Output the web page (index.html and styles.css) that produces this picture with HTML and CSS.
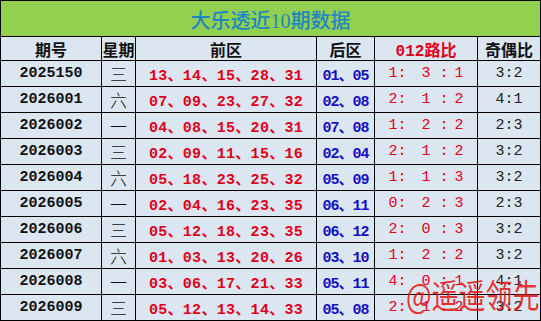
FILE: index.html
```html
<!DOCTYPE html>
<html lang="zh">
<head>
<meta charset="utf-8">
<title>大乐透近10期数据</title>
<link rel="stylesheet" href="styles.css">
</head>
<body>
<div class="sheet">
  <div class="title">大乐透近10期数据</div>
  <div class="hd">期号</div><div class="hd">星期</div><div class="hd">前区</div><div class="hd">后区</div><div class="hd red">012路比</div><div class="hd">奇偶比</div>

  <div class="c id">2025150</div><div class="c wk">三</div><div class="c fr">13、14、15、28、31</div><div class="c bk">01、05</div><div class="c ra">1<i>:</i> 3 <i>:</i>1</div><div class="c oe">3:2</div>
  <div class="c id">2026001</div><div class="c wk">六</div><div class="c fr">07、09、23、27、32</div><div class="c bk">02、08</div><div class="c ra">2<i>:</i> 1 <i>:</i>2</div><div class="c oe">4:1</div>
  <div class="c id">2026002</div><div class="c wk">一</div><div class="c fr">04、08、15、20、31</div><div class="c bk">07、08</div><div class="c ra">1<i>:</i> 2 <i>:</i>2</div><div class="c oe">2:3</div>
  <div class="c id">2026003</div><div class="c wk">三</div><div class="c fr">02、09、11、15、16</div><div class="c bk">02、04</div><div class="c ra">2<i>:</i> 1 <i>:</i>2</div><div class="c oe">3:2</div>
  <div class="c id">2026004</div><div class="c wk">六</div><div class="c fr">05、18、23、25、32</div><div class="c bk">05、09</div><div class="c ra">1<i>:</i> 1 <i>:</i>3</div><div class="c oe">3:2</div>
  <div class="c id">2026005</div><div class="c wk">一</div><div class="c fr">02、04、16、23、35</div><div class="c bk">06、11</div><div class="c ra">0<i>:</i> 2 <i>:</i>3</div><div class="c oe">2:3</div>
  <div class="c id">2026006</div><div class="c wk">三</div><div class="c fr">05、12、18、23、35</div><div class="c bk">06、12</div><div class="c ra">2<i>:</i> 0 <i>:</i>3</div><div class="c oe">3:2</div>
  <div class="c id">2026007</div><div class="c wk">六</div><div class="c fr">01、03、13、20、26</div><div class="c bk">03、10</div><div class="c ra">1<i>:</i> 2 <i>:</i>2</div><div class="c oe">3:2</div>
  <div class="c id">2026008</div><div class="c wk">一</div><div class="c fr">03、06、17、21、33</div><div class="c bk">05、11</div><div class="c ra">4<i>:</i> 0 <i>:</i>1</div><div class="c oe">4:1</div>
  <div class="c id">2026009</div><div class="c wk">三</div><div class="c fr">05、12、13、14、33</div><div class="c bk">05、08</div><div class="c ra">2<i>:</i> 1 <i>:</i>2</div><div class="c oe">3:2</div>
</div>
<div class="mark">@遥遥领先</div>
</body>
</html>
```
FILE: styles.css
```css
html, body {
  margin: 0;
  padding: 0;
  background: #ffffff;
}
body {
  position: relative;
  width: 541px;
  height: 321px;
  overflow: hidden;
}
.sheet {
  display: grid;
  grid-template-columns: 100px 33px 180px 57px 102px 62px;
  grid-template-rows: 35px 23px repeat(10, 25px);
  gap: 1px;
  padding: 1px;
  background: #000;
  width: 541px;
  box-sizing: border-box;
}
.title {
  grid-column: 1 / -1;
  background: #92d050;
  color: #1f86c2;
  font-family: "Liberation Serif", "Noto Sans CJK SC", sans-serif;
  font-size: 20px;
  font-weight: 500;
  display: flex;
  align-items: center;
  justify-content: center;
  padding-top: 1px;
}
.hd, .c {
  background: #dce6f1;
  display: flex;
  align-items: center;
  justify-content: center;
  white-space: pre;
}
.hd {
  font-family: "Liberation Mono", "Noto Sans CJK SC", monospace;
  font-size: 16px;
  font-weight: 700;
  color: #111;
}
.hd.red {
  color: #e0001b;
}
.c {
  font-family: "Liberation Mono", "Noto Sans CJK SC", monospace;
  font-size: 15px;
}
.id {
  font-weight: 700;
  color: #111;
}
.wk {
  font-family: "Noto Sans CJK SC", sans-serif;
  font-size: 17px;
  font-weight: 300;
  color: #111;
}
.fr {
  font-weight: 700;
  color: #e0001b;
  letter-spacing: 0.3px;
}
.bk {
  font-weight: 700;
  color: #1010c4;
  letter-spacing: -1px;
}
.ra {
  color: #e0001b;
}
.ra i {
  font-style: normal;
  display: inline-block;
  width: 15px;
  text-align: left;
}
.oe {
  color: #222;
}
.mark {
  position: absolute;
  left: 406px;
  top: 274px;
  font-family: "Noto Sans CJK SC", sans-serif;
  font-size: 27px;
  font-weight: 400;
  line-height: 34px;
  letter-spacing: 0;
  color: rgba(228, 26, 26, 0.9);
  white-space: nowrap;
  transform: scaleY(1.22);
  transform-origin: left top;
}
```
